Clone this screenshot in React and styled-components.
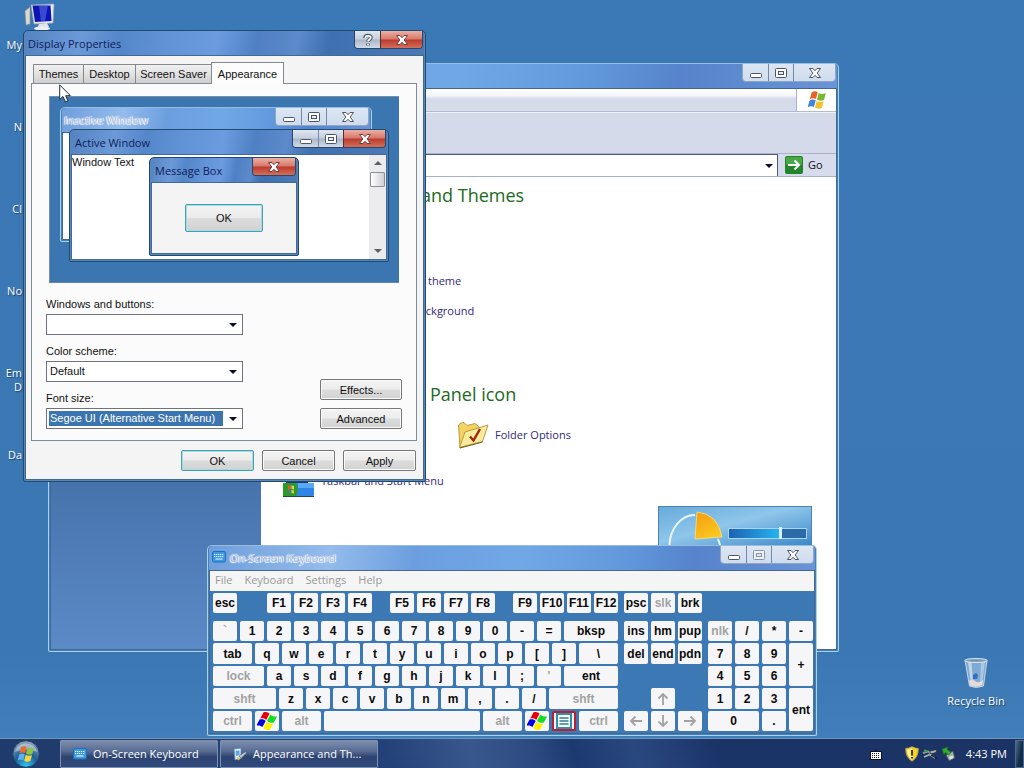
import React from 'react';
import styled, { createGlobalStyle, css } from 'styled-components';

const UI = '"Open Sans", "Noto Sans", sans-serif';
const CLASSIC = '"Liberation Sans", Arial, sans-serif';

const GlobalStyle = createGlobalStyle`
  * { box-sizing: border-box; }
  html, body { margin: 0; padding: 0; height: 100%; }
  body { overflow: hidden; background: #3b78b5; font: 11px/16px ${UI}; color: #111; }
  button, input, select { font: inherit; color: inherit; margin: 0; }
  svg { display: block; flex: none; }
`;

/* ---------- icons ---------- */

const Flag = ({ size = 20, flat }) => {
  const c = flat
    ? ['#e8000c', '#11dd22', '#0000e0', '#fff000']
    : ['#e8622a', '#7cb82f', '#3d86d8', '#f6c12c'];
  return (
    <svg width={size} height={size} viewBox="0 0 20 20" aria-hidden="true">
      <g transform={flat ? 'rotate(14 10 10)' : undefined}>
        <path d="M4.6 2.4C7 .9 9 1.200 10.700 2.300L9 9.100C7.200 7.900 5 7.900 2.800 9.200Z" fill={c[0]} />
        <path d="M11.700 2.900C13.800 4.300 16.400 4.100 18.800 3L17 9.900C14.700 11 12.200 11 10 9.700Z" fill={c[1]} />
        <path d="M2.500 10.400C4.800 9.100 7 9.200 8.700 10.300L7 17C5.100 15.800 2.900 15.900.7 17.200Z" fill={c[2]} />
        <path d="M9.700 10.900C11.900 12.200 14.300 12.200 16.700 11.200L14.900 17.900C12.600 19 10 18.900 8 17.600Z" fill={c[3]} />
      </g>
    </svg>
  );
};

const MinGlyph = () => (
  <svg width="14" height="12" viewBox="0 0 14 12" aria-hidden="true">
    <rect x="1.500" y="6.500" width="11" height="4" rx="1" fill="#fff" stroke="#4b5568" />
  </svg>
);

const MaxGlyph = ({ dim }) => (
  <svg width="12" height="12" viewBox="0 0 12 12" aria-hidden="true" opacity={dim ? 0.55 : 1}>
    <rect x=".5" y="1.500" width="11" height="9" rx="1" fill="#fff" stroke="#4b5568" />
    <rect x="3.500" y="4.500" width="5" height="3" fill="#e8ecf3" stroke="#4b5568" />
  </svg>
);

const CloseGlyph = ({ red }) => (
  <svg width="14" height="12" viewBox="0 0 14 12" aria-hidden="true">
    <path
      d="M1.500 1.500H5L7 3.700 9 1.500H12.500L9.200 6 12.500 10.500H9L7 8.300 5 10.500H1.500L4.800 6Z"
      fill="#fff"
      stroke={red ? '#7a3a3c' : '#4b5568'}
      strokeLinejoin="round"
    />
  </svg>
);

const HelpGlyph = () => (
  <svg width="12" height="14" viewBox="0 0 12 14" fill="none" aria-hidden="true">
    <path d="M3 5C3 1.800 9 1.800 9 4.600 9 6.500 6 6.400 6 8.800M6 10.500V12.500" stroke="#4b5568" strokeWidth="3.600" />
    <path d="M3.400 5C3.400 2.300 8.800 2.300 8.800 4.600 8.800 6.500 6 6.400 6 8.600M6 10.700V12.200" stroke="#fff" strokeWidth="1.700" />
  </svg>
);

const Caret = () => (
  <svg width="8" height="4" viewBox="0 0 8 4" aria-hidden="true">
    <path d="M0 0H8L4 4Z" fill="#0a0a2c" />
  </svg>
);

const ScrollArrow = ({ up }) => (
  <svg width="8" height="5" viewBox="0 0 8 5" aria-hidden="true">
    <path d={up ? 'M0 5 4 1 8 5Z' : 'M0 0H8L4 4Z'} fill="#5a6068" />
  </svg>
);

const KeyboardIcon = () => (
  <svg width="14" height="12" viewBox="0 0 14 12" aria-hidden="true">
    <rect x=".5" y=".5" width="13" height="10.500" rx="1.500" fill="#3c9be0" stroke="#1d6fb8" />
    <path d="M2 3.500H12M2 5.500H12" stroke="#e4f5ff" strokeDasharray="1.300 .7" />
    <path d="M3.500 8H10.500" stroke="#e4f5ff" strokeWidth="1.200" />
  </svg>
);

const ComputerIcon = () => (
  <svg width="32" height="28" viewBox="0 0 32 28" aria-hidden="true">
    <path d="M1 8 6 4V21L2 22Z" fill="#d9dccd" stroke="#8d917f" strokeWidth=".6" />
    <path d="M7 2 30 1 29 20 10 21Z" fill="#e9ecf2" stroke="#9aa2b0" strokeWidth=".7" />
    <path d="M8.500 2.500 26.500 2.500 27.500 18 11 19Z" fill="#0d13b5" />
    <path d="M15 2.500H24L21 18.300 17 18.600Z" fill="#4b62de" opacity=".7" />
    <path d="M15 21 23 20 25 24 13 26Z" fill="#dfe3ea" />
    <ellipse cx="18" cy="25.500" rx="8" ry="2.200" fill="#eceef2" />
  </svg>
);

const BinIcon = () => (
  <svg width="26" height="32" viewBox="0 0 26 32" aria-hidden="true">
    <path d="M2 3.500H24L20.500 29Q13 32 6.500 29Z" fill="#aecbe6" fillOpacity=".6" stroke="#d9e8f5" strokeWidth=".8" />
    <path d="M5 5 8 27H10L8.500 5Z" fill="#fff" opacity=".5" />
    <path d="M18 5 17 27H19L22 5Z" fill="#fff" opacity=".35" />
    <path d="M6 24Q9 21 12 24T20 23L19.500 28Q13 31 7 28.500Z" fill="#e5dcd7" />
    <path d="M10 18 13 16 15 18 14 22 10 22Z" fill="#2566c4" opacity=".85" />
    <ellipse cx="13" cy="3.500" rx="11.300" ry="2" fill="#7a99b8" stroke="#e8f1f9" strokeWidth=".9" />
  </svg>
);

const FolderOptionsIcon = () => (
  <svg width="32" height="28" viewBox="0 0 32 28" aria-hidden="true">
    <path d="M1.500 4Q4 1 7 1.500L10 4.500 18 2.500 22 6V20L3 26.500Z" fill="#f2d463" stroke="#a8862b" strokeWidth=".8" />
    <path d="M2.500 26.500 8 11 31 4 25.500 20.500Z" fill="#fbeb9a" stroke="#a8862b" strokeWidth=".8" />
    <path d="M3 27 25.500 21" stroke="#6d5a23" />
    <path d="M13 15.500 16.500 19.500 23 8" fill="none" stroke="#9c2317" strokeWidth="2.400" />
  </svg>
);

const TaskbarIcon = () => (
  <svg width="32" height="32" viewBox="0 0 32 32" aria-hidden="true">
    <path d="M3 4H25V18H3Z" fill="#1b3c66" />
    <rect x="0" y="18" width="31" height="13" rx="1" fill="#2d86e6" />
    <rect x="15" y="18" width="16" height="5" fill="#58a8f5" />
    <path d="M0 18H13Q17 24 13 31H0Z" fill="#2c9a2a" />
    <path d="M5 21 8 20V24L5 25Z" fill="#e8582a" />
    <path d="M8.500 20.500 11 21V24.500L8.500 24Z" fill="#b8e06a" />
    <path d="M6 25.500 8 25V28L6 28Z" fill="#3c78e8" />
    <path d="M8.500 25 11 25.500V28.500L8.500 28Z" fill="#f5cd3a" />
    <path d="M0 31.500H31" stroke="#1d4b4e" />
  </svg>
);

const GoIcon = () => (
  <svg width="18" height="18" viewBox="0 0 18 18" aria-hidden="true">
    <rect width="18" height="18" rx="2" fill="#23852b" />
    <rect x="1" y="1" width="16" height="8" rx="1" fill="#48a848" />
    <path d="M3 9H14M9.500 4.500 14 9 9.500 13.500" fill="none" stroke="#fff" strokeWidth="2" />
  </svg>
);

const DisplayArt = () => (
  <svg width="154" height="40" viewBox="0 0 154 40" aria-hidden="true">
    <defs>
      <linearGradient id="art-bg" x1="0" y1="0" x2="1" y2="1">
        <stop offset="0" stopColor="#66aadb" />
        <stop offset=".45" stopColor="#8fc6ea" />
        <stop offset="1" stopColor="#3a86c8" />
      </linearGradient>
      <linearGradient id="art-bar">
        <stop offset="0" stopColor="#1c62b4" />
        <stop offset="1" stopColor="#25b3f0" />
      </linearGradient>
      <linearGradient id="art-pie" x1="0" y1="0" x2=".6" y2="1">
        <stop offset="0" stopColor="#f49a10" />
        <stop offset="1" stopColor="#fbc81e" />
      </linearGradient>
    </defs>
    <rect x=".5" y=".5" width="153" height="40" fill="url(#art-bg)" stroke="#4d83ad" />
    <path d="M11.500 40A25.500 31 0 0 1 37 9M60 33 62.500 40" fill="none" stroke="#e6f6ff" strokeWidth="2" />
    <path d="M39 6Q60 8 64 31L37 33Z" fill="url(#art-pie)" stroke="#fbe08a" strokeWidth=".8" />
    <rect x="70.500" y="22.500" width="78" height="10" fill="#2d6aa8" stroke="#a7d6f2" />
    <rect x="71" y="23" width="50" height="9" fill="url(#art-bar)" />
    <rect x="121" y="21" width="3" height="12" fill="#d8f2ff" />
  </svg>
);

const StartOrb = () => (
  <svg width="28" height="28" viewBox="0 0 28 28" aria-hidden="true">
    <defs>
      <radialGradient id="orb" cx=".5" cy=".95" r=".9">
        <stop offset="0" stopColor="#35c8f2" />
        <stop offset=".5" stopColor="#1d5c98" />
        <stop offset="1" stopColor="#8ba0b8" />
      </radialGradient>
    </defs>
    <circle cx="14" cy="14" r="13.300" fill="url(#orb)" stroke="#26405f" />
    <path d="M2.500 12A12 12 0 0 1 25.500 12Q14 7 2.500 12Z" fill="#fff" opacity=".4" />
    <svg x="5" y="5" width="18" height="18" viewBox="0 0 20 20">
      <path d="M4.600 2.400C7 .9 9 1.200 10.700 2.300L9 9.100C7.200 7.900 5 7.900 2.800 9.200Z" fill="#ec6a2c" />
      <path d="M11.700 2.900C13.800 4.300 16.400 4.100 18.800 3L17 9.900C14.700 11 12.200 11 10 9.700Z" fill="#8cc63c" />
      <path d="M2.500 10.400C4.800 9.100 7 9.200 8.700 10.300L7 17C5.100 15.800 2.900 15.900.7 17.200Z" fill="#58b4ee" />
      <path d="M9.700 10.900C11.900 12.200 14.300 12.200 16.700 11.200L14.900 17.900C12.600 19 10 18.900 8 17.600Z" fill="#fbd33c" />
    </svg>
  </svg>
);

const AppearanceIcon = () => (
  <svg width="14" height="14" viewBox="0 0 14 14" aria-hidden="true">
    <path d="M1 2 8 1V11L2 13Z" fill="#dcecf8" stroke="#5a89b4" strokeWidth=".8" />
    <path d="M2.500 4 6.500 3.500V8L3 9Z" fill="#5ba4dc" />
    <path d="M6 9 12.500 4.500 13.500 6 8 11.500Z" fill="#bfc8d4" stroke="#4a5566" strokeWidth=".6" />
    <path d="M4 10 8 11.500 5 13.500Z" fill="#e9c64c" />
  </svg>
);

const TrayKeyboard = () => (
  <svg width="12" height="12" viewBox="0 0 12 12" aria-hidden="true">
    <rect x=".5" y="3.500" width="11" height="8" fill="#fff" stroke="#0a1230" />
    <path d="M2 5.500H10M2 7.500H10M2 9.500H10" stroke="#0a1230" strokeDasharray="1 1" />
    <path d="M5 3 7 1.500" stroke="#0a1230" />
  </svg>
);

const Shield = () => (
  <svg width="14" height="16" viewBox="0 0 14 16" aria-hidden="true">
    <path d="M7 .8Q10 2.500 13.200 2.500 13.500 11 7 15.200.5 11 .8 2.500 4 2.500 7 .8Z" fill="#f5d320" stroke="#b9ab5c" />
    <path d="M7 2Q4.500 3.500 2 3.600 2 10 7 14Z" fill="#fff08a" />
    <path d="M7 4V9.500M7 11V12.500" stroke="#2e2a10" strokeWidth="1.800" />
  </svg>
);

const NetworkIcon = () => (
  <svg width="16" height="14" viewBox="0 0 16 14" aria-hidden="true">
    <path d="M1 6 6 4.500 9 6" fill="none" stroke="#8b9a92" strokeWidth="2" />
    <path d="M8 4 15 2.500 14 5.500 8.500 7Z" fill="#aab5ae" stroke="#1c2836" strokeWidth=".7" />
    <path d="M2 10 8 7.500 13 11" fill="none" stroke="#a9b6ae" strokeWidth="1.800" />
    <path d="M2 3 6 4.500" stroke="#3da044" strokeWidth="1.500" />
    <path d="M9 8 15 11.500" stroke="#16202c" strokeWidth="1.200" />
  </svg>
);

const EjectIcon = () => (
  <svg width="16" height="16" viewBox="0 0 16 16" aria-hidden="true">
    <path d="M5 9 12 5 14 12 8 15Z" fill="#a3aeb0" stroke="#3a464e" strokeWidth=".8" />
    <path d="M8 11 12 9.500V12L9 13.500Z" fill="#dfe6e6" />
    <path d="M1 3 7 1 6 3.500 10 6 8 9 4 6.500 3 9Z" fill="#2fae2c" stroke="#166b1a" strokeWidth=".6" />
  </svg>
);

const ArrowKey = ({ d }) => (
  <svg width="14" height="14" viewBox="0 0 14 14" aria-hidden="true">
    <g transform={`rotate(${d} 7 7)`} fill="none" stroke="#a2a2a2" strokeWidth="1.800">
      <path d="M7 13V2M2.500 6.500 7 2 11.500 6.500" />
    </g>
  </svg>
);

const MenuKeyIcon = () => (
  <svg width="16" height="16" viewBox="0 0 16 16" aria-hidden="true">
    <rect x="1" y="1" width="14" height="14" fill="#fff" stroke="#2b93ad" strokeWidth="2" />
    <path d="M3.500 5H12.500M3.500 8H12.500M3.500 11H12.500" stroke="#2b7e98" strokeWidth="1.500" />
  </svg>
);

const Pointer = styled.svg.attrs({ width: 13, height: 20, viewBox: '0 0 13 20' })`
  position: absolute;
  left: 35px;
  top: 53px;
  z-index: 3;
`;

/* ---------- windows ---------- */

const Desktop = styled.div`
  display: flex;
  flex-direction: column;
  min-height: 100vh;
  background: linear-gradient(#3b78b6, #3b77b2 85%, #4480bd);
`;

const Workspace = styled.main`
  position: relative;
  flex: 1;
`;

const Window = styled.section`
  position: absolute;
  display: flex;
  flex-direction: column;
  left: ${p => p.$x}px;
  top: ${p => p.$y}px;
  width: ${p => p.$w}px;
  min-height: ${p => p.$h}px;
  padding: 0 1px 1px;
  border: 1px solid ${p => (p.$inactive ? '#a5d3ee' : '#1f4a74')};
  border-top-color: ${p => (p.$inactive ? '#96bde0' : '#1f4a74')};
  border-radius: 5px 5px 2px 2px;
  background: ${p => (p.$inactive ? '#477fb9' : '#5a87b4')};
  overflow: hidden;
`;

const activeBar = css`
  background: linear-gradient(100deg, #5583c2 0, #6c9ad8 14%, #5486ca 24%, #6293d6 36%, #6c9be0 48%, #4f80c4 58%, #5c8aca 68%, #3f70b0 76%, #4a79b6 100%);
`;
const inactiveBar = css`
  background: linear-gradient(100deg, #6f9edc 0, #94bcec 20%, #6c9edf 34%, #70a8e6 52%, #6199dc 68%, #5683cb 80%, #6994d6 100%);
`;

const TitleBar = styled.header`
  display: flex;
  align-items: flex-start;
  height: 24px;
  padding: 0 1px 0 ${p => p.$pad ?? 4}px;
  gap: 4px;
  border-radius: 4px 4px 0 0;
  ${p => (p.$inactive ? inactiveBar : activeBar)}
`;

const Title = styled.h1`
  flex: 1;
  margin: 0;
  padding-top: ${p => (p.$inactive ? 3 : 4)}px;
  font: 400 11px/18px ${UI};
  white-space: nowrap;
  color: #101c58;
  ${p => p.$inactive && css`
    color: #a9bbd8;
    text-shadow: 0 0 1px #fff, 1px 0 1px #fff, -1px 1px 1px #fff;
  `}
`;

const TitleIcon = styled.span`
  padding-top: 5px;
`;

const CaptionGroup = styled.div`
  display: flex;
  height: 18px;
  border: 1px solid ${p => (p.$inactive ? '#8fa5c4' : '#2c4668')};
  border-top: 0;
  border-radius: 0 0 4px 4px;
  overflow: hidden;
`;

const CaptionButton = styled.button`
  display: grid;
  place-items: center;
  width: ${p => (p.$wide ? 42 : 25)}px;
  padding: 0;
  border: 0;
  border-left: ${p => (p.$first ? 0 : '1px solid #7489a8')};
  background: linear-gradient(#dfe6f0 0, #c5cfdd 48%, #a9b6c9 52%, #d3dbe7 100%);
  ${p => p.$inactive && css`background: linear-gradient(#dde6f2, #cfdcee);`}
  ${p => p.$red && css`
    border-left-color: #5c2a33;
    background: linear-gradient(#eab0a4 0, #d7786a 48%, #bb3a2c 52%, #d4705a 100%);
  `}
`;

const Captions = ({ inactive, close, help, dimMax }) => (
  <CaptionGroup $inactive={inactive}>
    {help && <CaptionButton $first aria-label="Help"><HelpGlyph /></CaptionButton>}
    {!help && !close && (
      <>
        <CaptionButton $first $inactive={inactive} aria-label="Minimize"><MinGlyph /></CaptionButton>
        <CaptionButton $inactive={inactive} aria-label="Maximize"><MaxGlyph dim={dimMax} /></CaptionButton>
      </>
    )}
    <CaptionButton $wide $first={close} $inactive={inactive} $red={!inactive} aria-label="Close">
      <CloseGlyph red={!inactive} />
    </CaptionButton>
  </CaptionGroup>
);

const Client = styled.div`
  flex: 1;
  display: flex;
  flex-direction: column;
  border: 1px solid #44688f;
  background: ${p => p.$bg ?? '#fff'};
`;

/* ---------- explorer ---------- */

const MenuStrip = styled.div`
  display: flex;
  justify-content: flex-end;
  height: 22px;
  background: linear-gradient(#fff 0, #f4f6fb 30%, #d5daea 45%, #d8ddeb);
`;
const Throbber = styled.div`
  display: grid;
  place-items: center;
  width: 40px;
  background: #fff;
  border-left: 1px solid #a9b1c8;
`;
const ToolStrip = styled.div`
  height: 43px;
  background: #d4daea;
  border-top: 1px solid #b2bad0;
  border-bottom: 1px solid #aab3ca;
  box-shadow: inset 0 1px #eef1f8;
`;
const AddressRow = styled.div`
  display: flex;
  align-items: center;
  height: 23px;
  background: #d6dceb;
  border-bottom: 1px solid #a8b1c6;
`;
const AddressBox = styled.div`
  display: flex;
  align-items: center;
  flex: 1;
  height: 22px;
  padding-right: 4px;
  border: 1px solid #4a5a80;
  border-bottom: 0;
  background: #fff;
`;
const AddressInput = styled.input`
  flex: 1;
  border: 0;
  outline: 0;
  background: transparent;
`;
const GoButton = styled.button`
  display: flex;
  align-items: center;
  gap: 5px;
  width: 58px;
  padding: 0 0 0 7px;
  border: 0;
  background: none;
  font-size: 11px;
`;
const Split = styled.div`
  display: flex;
  flex: 1;
`;
const Sidebar = styled.aside`
  width: 210px;
  background: linear-gradient(#4571aa 0, #4672ab 63%, #5b8ac6 100%);
`;
const TaskPane = styled.div`
  flex: 1;
  display: flex;
  flex-direction: column;
  align-items: flex-start;
  padding: 5px 0 0 22px;
`;
const TaskHeading = styled.h2`
  margin: ${p => p.$gap ?? 0}px 0 0 ${p => p.$indent}px;
  font: 400 18px/26px ${UI};
  color: #1c6a22;
`;
const TaskLink = styled.a`
  display: flex;
  align-items: center;
  gap: 6px;
  margin: ${p => p.$gap}px 0 0 ${p => p.$indent}px;
  line-height: 18px;
  font-size: 11px;
  color: #35297c;
  text-decoration: none;
  white-space: nowrap;
`;
const Art = styled.div`
  align-self: flex-end;
  margin: 9px 24px 0 0;
`;

/* ---------- display properties ---------- */

const DialogBody = styled.div`
  padding: 6px 6px 8px 5px;
  font-family: ${CLASSIC};
`;
const TabRow = styled.div`
  display: flex;
  align-items: flex-end;
  height: 21px;
  padding-left: 2px;
`;
const Tab = styled.button`
  height: 19px;
  width: ${p => p.$w}px;
  padding: 0;
  border: 1px solid #84898f;
  border-bottom: 0;
  border-right-width: ${p => (p.$on ? 1 : 0)}px;
  background: linear-gradient(#f0f0f0, #e2e2e2 50%, #cfcfcf);
  font-size: 11px;
  white-space: nowrap;
  ${p => p.$on && css`
    height: 22px;
    margin-bottom: -1px;
    background: #fcfcfc;
    z-index: 1;
  `}
`;
const TabPanel = styled.div`
  display: flex;
  flex-direction: column;
  gap: 14px;
  padding: 12px 14px 11px;
  border: 1px solid #7f8c9c;
  background: #fbfbfb;
`;
const Preview = styled.div`
  position: relative;
  height: 187px;
  margin: 0 3px;
  border: 1px solid #7d8ea0;
  border-right: 0;
  border-bottom-color: #5f86ae;
  background: #3b76b1;
  font-family: ${CLASSIC};
`;
const PreviewText = styled.p`
  flex: 1;
  margin: 0;
  font: 11px/14px ${CLASSIC};
`;
const PreviewDoc = styled.div`
  display: flex;
  flex: 1;
`;
const ScrollTrack = styled.div`
  display: flex;
  flex-direction: column;
  align-items: center;
  width: 17px;
  padding: 5px 1px;
  background: #ececee;
`;
const ScrollThumb = styled.div`
  width: 15px;
  height: 15px;
  margin: 7px 0 auto;
  border: 1px solid #8d9096;
  border-radius: 1px;
  background: linear-gradient(90deg, #fff, #cfcfd4);
`;
const PushButton = styled.button`
  width: ${p => p.$w ?? 73}px;
  height: ${p => p.$h ?? 21}px;
  padding: 0;
  border: 1px solid ${p => (p.$default ? '#46a0b4' : '#777')};
  border-radius: 2px;
  background: linear-gradient(#f4f4f4, #ececec 48%, #dcdcdc 52%, #d2d2d2);
  box-shadow: inset 0 0 0 1px ${p => (p.$default ? '#a6dce6' : '#fafafa')};
  font-family: ${CLASSIC};
  font-size: 11px;
  align-self: ${p => (p.$center ? 'center' : 'auto')};
  margin: ${p => (p.$center ? 'auto' : 0)};
`;
const Options = styled.div`
  display: flex;
  justify-content: space-between;
  align-items: flex-end;
`;
const Fields = styled.div`
  display: flex;
  flex-direction: column;
  gap: 9px;
`;
const Field = styled.div`
  display: flex;
  flex-direction: column;
  gap: 2px;
`;
const FieldLabel = styled.label`
  font-size: 11px;
  line-height: 15px;
`;
const SelectWrap = styled.div`
  position: relative;
  display: flex;
  align-items: center;
  width: 197px;
  svg { position: absolute; right: 6px; pointer-events: none; }
`;
const Select = styled.select`
  appearance: none;
  width: 100%;
  height: 21px;
  padding: 2px 19px 2px 2px;
  border: 1px solid #6f747c;
  border-radius: 0;
  outline: 0;
  font: 11px/15px ${CLASSIC};
  text-indent: 1px;
  background: #fff;
  ${p => p.$lit && css`
    color: #fff;
    background: linear-gradient(#3b75b0, #3b75b0) content-box, #fff;
  `}
`;
const ButtonColumn = styled.div`
  display: flex;
  flex-direction: column;
  gap: 8px;
`;
const Footer = styled.footer`
  display: flex;
  justify-content: flex-end;
  gap: 8px;
  padding: 9px 1px 0 0;
`;

const SelectField = ({ id, label, value, lit }) => (
  <Field>
    <FieldLabel htmlFor={id}>{label}</FieldLabel>
    <SelectWrap>
      <Select id={id} $lit={lit} defaultValue={value}>
        <option value={value}>{value}</option>
      </Select>
      <Caret />
    </SelectWrap>
  </Field>
);

/* ---------- on-screen keyboard ---------- */

const MenuBar = styled.nav`
  display: flex;
  align-items: flex-start;
  gap: 12px;
  height: 20px;
  padding: 0 5px;
  background: #f5f5f5;
`;
const MenuItem = styled.button`
  padding: 0;
  border: 0;
  background: none;
  font-size: 11px;
  line-height: 18px;
  color: #999;
`;
const KeyArea = styled.div`
  display: flex;
  flex-direction: column;
  gap: 8px;
  padding: 2px 3px;
`;
const KeySection = styled.div`
  display: flex;
  gap: 6px;
`;
const KeyRow = styled.div`
  display: flex;
  gap: 3px;
  height: ${p => p.$h ?? 20}px;
`;
const KeyRows = styled.div`
  display: flex;
  flex-direction: column;
  gap: 2px;
  width: 405px;
`;
const KeyGrid = styled.div`
  display: grid;
  grid-template-columns: repeat(${p => p.$cols}, 24px);
  grid-template-rows: 20px 21px 20px 21px 20px;
  gap: 2px 3px;
`;
const Key = styled.button`
  display: flex;
  align-items: center;
  justify-content: center;
  width: ${p => (p.$w ? `${p.$w}px` : 'auto')};
  padding: 0;
  border: ${p => (p.$hot ? '2px solid #c21c30' : 0)};
  border-radius: 2px;
  background: #f6f6f8;
  font: 700 12px/14px ${CLASSIC};
  white-space: nowrap;
  color: ${p => (p.$dim ? '#a2a2a2' : '#0a0a0a')};
  grid-area: ${p => p.$area ?? 'auto'};
`;
const Gap = styled.span`
  width: ${p => p.$w}px;
`;

const renderKey = (k, i) => {
  if (typeof k === 'string') return <Key key={i} $w={24}>{k}</Key>;
  if (k.gap) return <Gap key={i} $w={k.gap} />;
  return (
    <Key key={i} $w={k.w ?? 24} $dim={k.dim} $hot={k.hot} $area={k.area} aria-label={k.name}>
      {k.t}
    </Key>
  );
};

const fnRow = [
  'esc', { gap: 24 }, 'F1', 'F2', 'F3', 'F4', { gap: 12 }, 'F5', 'F6', 'F7', 'F8',
  { gap: 12 }, 'F9', 'F10', 'F11', 'F12',
];
const mainRows = [
  [{ t: '`', dim: true }, ...'1234567890-='.split(''), { t: 'bksp', w: 54 }],
  [{ t: 'tab', w: 39 }, ...'qwertyuiop[]'.split(''), { t: '\\', w: 39 }],
  [{ t: 'lock', w: 51, dim: true }, ...'asdfghjkl;'.split(''), { t: "'", dim: true }, { t: 'ent', w: 54 }],
  [{ t: 'shft', w: 63, dim: true }, ...'zxcvbnm,./'.split(''), { t: 'shft', w: 69, dim: true }],
  [
    { t: 'ctrl', w: 39, dim: true }, { t: <Flag size={20} flat />, name: 'Windows' },
    { t: 'alt', w: 39, dim: true }, { t: '', w: 156, name: 'Space' }, { t: 'alt', w: 39, dim: true },
    { t: <Flag size={20} flat />, name: 'Windows' }, { t: <MenuKeyIcon />, hot: true, name: 'Menu' },
    { t: 'ctrl', w: 39, dim: true },
  ],
];
const navKeys = [
  { t: 'ins', area: '1/1' }, { t: 'hm', area: '1/2' }, { t: 'pup', area: '1/3' },
  { t: 'del', area: '2/1' }, { t: 'end', area: '2/2' }, { t: 'pdn', area: '2/3' },
  { t: <ArrowKey d={0} />, area: '4/2', name: 'Up' }, { t: <ArrowKey d={270} />, area: '5/1', name: 'Left' },
  { t: <ArrowKey d={180} />, area: '5/2', name: 'Down' }, { t: <ArrowKey d={90} />, area: '5/3', name: 'Right' },
];
const padKeys = [
  { t: 'nlk', area: '1/1', dim: true }, { t: '/', area: '1/2' }, { t: '*', area: '1/3' }, { t: '-', area: '1/4' },
  { t: '7', area: '2/1' }, { t: '8', area: '2/2' }, { t: '9', area: '2/3' }, { t: '+', area: '2/4/4/5' },
  { t: '4', area: '3/1' }, { t: '5', area: '3/2' }, { t: '6', area: '3/3' },
  { t: '1', area: '4/1' }, { t: '2', area: '4/2' }, { t: '3', area: '4/3' }, { t: 'ent', area: '4/4/6/5' },
  { t: '0', w: 51, area: '5/1/6/3' }, { t: '.', area: '5/3' },
];

/* ---------- desktop items and taskbar ---------- */

const IconColumn = styled.div`
  display: flex;
  flex-direction: column;
  gap: 50px;
  width: 60px;
  padding-top: 3px;
`;
const DesktopIcon = styled.div`
  display: flex;
  flex-direction: column;
  align-items: flex-end;
  gap: 7px;
`;
const EdgeLabel = styled.span`
  width: 22px;
  min-height: 32px;
  margin-right: auto;
  text-align: right;
  font-size: 11px;
  color: #fff;
  white-space: pre-line;
  line-height: 14px;
  text-shadow: 1px 1px 1px #1d4370;
`;
const IconArt = styled.span`
  margin-right: 4px;
`;
const RecycleBin = styled.div`
  position: absolute;
  right: 12px;
  bottom: 28px;
  width: 72px;
  display: flex;
  flex-direction: column;
  align-items: center;
  gap: 3px;
  font-size: 11px;
  line-height: 18px;
  color: #fff;
  white-space: nowrap;
  text-shadow: 1px 1px 1px #1d4370;
`;
const Taskbar = styled.footer`
  display: flex;
  align-items: center;
  height: 30px;
  border-top: 1px solid #6f96b6;
  background: linear-gradient(75deg, #1f3a6c 0, #24406f 25%, #24427a 38%, #38578c 46%, #2d4b82 52%, #1c3970 56%, #2a4880 62%, #1b3468 70%, #1b3364 100%);
`;
const StartButton = styled.button`
  width: 60px;
  padding: 0 0 0 12px;
  border: 0;
  background: none;
`;
const TaskButton = styled.button`
  display: flex;
  align-items: center;
  gap: 6px;
  width: 158px;
  height: 28px;
  margin-right: 2px;
  padding: 0 12px;
  border: 1px solid #7c90b2;
  border-radius: 1px;
  background: linear-gradient(#7d8eae 0, #566a92 40%, #2e4471 60%, #304a7c 100%);
  color: #fff;
  font-size: 11px;
  white-space: nowrap;
`;
const Tray = styled.div`
  display: flex;
  align-items: center;
  gap: 3px;
  margin-left: auto;
  color: #fff;
  font-size: 11px;
`;
const TraySpacer = styled.span`
  width: ${p => p.$w}px;
`;
const ShowDesktop = styled.button`
  width: 9px;
  height: 28px;
  padding: 0;
  border: 1px solid #4c6a8a;
  background: linear-gradient(100deg, #4c6c88, #142a48 60%);
`;

export default function App() {
  return (
    <Desktop>
      <GlobalStyle />
      <Workspace>
        <IconColumn>
          <DesktopIcon>
            <IconArt><ComputerIcon /></IconArt>
            <EdgeLabel>My</EdgeLabel>
          </DesktopIcon>
          {['N', 'Cl', 'No', 'Em\nD', 'Da'].map(t => (
            <EdgeLabel key={t}>{t}</EdgeLabel>
          ))}
        </IconColumn>

        <RecycleBin>
          <BinIcon />
          <span>Recycle Bin</span>
        </RecycleBin>

        <Window $x={48} $y={63} $w={791} $h={589} $inactive aria-label="Appearance and Themes">
          <TitleBar $inactive>
            <Title $inactive />
            <Captions inactive />
          </TitleBar>
          <Client>
            <MenuStrip><Throbber><Flag size={20} /></Throbber></MenuStrip>
            <ToolStrip />
            <AddressRow>
              <AddressBox>
                <AddressInput aria-label="Address" />
                <Caret />
              </AddressBox>
              <GoButton><GoIcon />Go</GoButton>
            </AddressRow>
            <Split>
              <Sidebar />
              <TaskPane>
                <TaskHeading $indent={138}>and Themes</TaskHeading>
                <TaskLink href="#theme" $indent={145} $gap={64}>theme</TaskLink>
                <TaskLink href="#background" $indent={130} $gap={12}>background</TaskLink>
                <TaskHeading $indent={147} $gap={61}>Panel icon</TaskHeading>
                <TaskLink href="#folders" $indent={174} $gap={14}><FolderOptionsIcon />Folder Options</TaskLink>
                <TaskLink href="#taskbar" $indent={0} $gap={16}><TaskbarIcon />Taskbar and Start Menu</TaskLink>
                <Art><DisplayArt /></Art>
              </TaskPane>
            </Split>
          </Client>
        </Window>

        <Window $x={207} $y={545} $w={610} $h={191} $inactive>
          <TitleBar $inactive $pad={3}>
            <TitleIcon><KeyboardIcon /></TitleIcon>
            <Title $inactive>On-Screen Keyboard</Title>
            <Captions inactive dimMax />
          </TitleBar>
          <Client $bg="#3b78b4">
            <MenuBar>
              {['File', 'Keyboard', 'Settings', 'Help'].map(m => <MenuItem key={m}>{m}</MenuItem>)}
            </MenuBar>
            <KeyArea>
              <KeySection>
                <KeyRow>{fnRow.map(renderKey)}</KeyRow>
                <KeyRow>{['psc', { t: 'slk', dim: true }, 'brk'].map(renderKey)}</KeyRow>
              </KeySection>
              <KeySection>
                <KeyRows>
                  {mainRows.map((r, i) => <KeyRow key={i} $h={i % 2 ? 21 : 20}>{r.map(renderKey)}</KeyRow>)}
                </KeyRows>
                <KeyGrid $cols={3}>{navKeys.map(renderKey)}</KeyGrid>
                <KeyGrid $cols={4}>{padKeys.map(renderKey)}</KeyGrid>
              </KeySection>
            </KeyArea>
          </Client>
        </Window>

        <Window $x={23} $y={30} $w={403} $h={451}>
          <TitleBar $pad={3}>
            <Title>Display Properties</Title>
            <Captions help />
          </TitleBar>
          <Client $bg="#f4f4f4">
            <DialogBody>
              <TabRow role="tablist">
                <Tab role="tab" $w={50}>Themes</Tab>
                <Tab role="tab" $w={52}>Desktop</Tab>
                <Tab role="tab" $w={76}>Screen Saver</Tab>
                <Tab role="tab" $w={73} $on aria-selected="true">Appearance</Tab>
              </TabRow>
              <TabPanel>
                <Preview>
                  <Window $x={10} $y={10} $w={312} $h={135} $inactive>
                    <TitleBar $inactive $pad={2}><Title $inactive>Inactive Window</Title><Captions inactive /></TitleBar>
                    <Client />
                  </Window>
                  <Window $x={19} $y={32} $w={320} $h={133}>
                    <TitleBar><Title>Active Window</Title><Captions /></TitleBar>
                    <Client>
                      <PreviewDoc>
                        <PreviewText>Window Text</PreviewText>
                        <ScrollTrack>
                          <ScrollArrow up />
                          <ScrollThumb />
                          <ScrollArrow />
                        </ScrollTrack>
                      </PreviewDoc>
                    </Client>
                  </Window>
                  <Window $x={99} $y={60} $w={150} $h={99}>
                    <TitleBar><Title>Message Box</Title><Captions close /></TitleBar>
                    <Client $bg="#f4f4f4">
                      <PushButton $w={78} $h={28} $default $center>OK</PushButton>
                    </Client>
                  </Window>
                </Preview>
                <Options>
                  <Fields>
                    <SelectField id="buttons" label="Windows and buttons:" value="" />
                    <SelectField id="scheme" label="Color scheme:" value="Default" />
                    <SelectField id="size" label="Font size:" value="Segoe UI (Alternative Start Menu)" lit />
                  </Fields>
                  <ButtonColumn>
                    <PushButton $w={82}>Effects...</PushButton>
                    <PushButton $w={82}>Advanced</PushButton>
                  </ButtonColumn>
                </Options>
              </TabPanel>
              <Footer>
                <PushButton $default>OK</PushButton>
                <PushButton>Cancel</PushButton>
                <PushButton>Apply</PushButton>
              </Footer>
            </DialogBody>
          </Client>
          <Pointer aria-hidden="true">
            <path d="M.7 1V15.500L4 12.500 6.500 18 9 17 6.700 11.700H11.500Z" fill="#fff" stroke="#222c40" />
          </Pointer>
        </Window>
      </Workspace>

      <Taskbar>
        <StartButton aria-label="Start"><StartOrb /></StartButton>
        <TaskButton><KeyboardIcon />On-Screen Keyboard</TaskButton>
        <TaskButton><AppearanceIcon />Appearance and Th...</TaskButton>
        <Tray>
          <TrayKeyboard />
          <TraySpacer $w={17} />
          <Shield />
          <NetworkIcon />
          <EjectIcon />
          <TraySpacer $w={3} />
          <time>4:43 PM</time>
          <TraySpacer $w={2} />
          <ShowDesktop aria-label="Show desktop" />
        </Tray>
      </Taskbar>
    </Desktop>
  );
}
